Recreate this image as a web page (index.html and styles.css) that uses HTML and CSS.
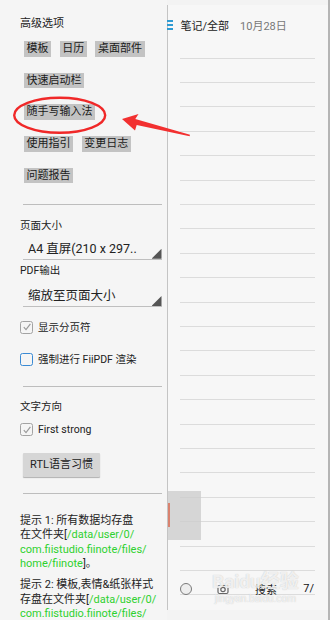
FILE: index.html
```html
<!DOCTYPE html>
<html lang="zh">
<head>
<meta charset="utf-8">
<link rel="stylesheet" href="styles.css">
</head>
<body>
<div class="screen">
  <aside class="settings">
    <div class="title">高级选项</div>
    <div class="btn-rows">
      <div class="btn-row"><span class="tag">模板</span><span class="tag">日历</span><span class="tag">桌面部件</span></div>
      <div class="btn-row"><span class="tag">快速启动栏</span></div>
      <div class="btn-row"><span class="tag">随手写输入法</span></div>
      <div class="btn-row"><span class="tag">使用指引</span><span class="tag">变更日志</span></div>
      <div class="btn-row"><span class="tag">问题报告</span></div>
    </div>
    <div class="divider d1"></div>
    <div class="label l-page">页面大小</div>
    <div class="spinner s1">A4 直屏(210 x 297..</div>
    <div class="label l-pdf">PDF输出</div>
    <div class="spinner s2">缩放至页面大小</div>
    <div class="check c1"><span class="box checked"><svg viewBox="0 0 10 10" width="10" height="10"><path d="M1.8 5.2 L4 7.6 L8.4 1.8" fill="none" stroke="#9a9a9a" stroke-width="1.2"/></svg></span><span class="check-text">显示分页符</span></div>
    <div class="check c2"><span class="box blue"></span><span class="check-text">强制进行 FiiPDF 渲染</span></div>
    <div class="divider d2"></div>
    <div class="label l-dir">文字方向</div>
    <div class="check c3"><span class="box checked"><svg viewBox="0 0 10 10" width="10" height="10"><path d="M1.8 5.2 L4 7.6 L8.4 1.8" fill="none" stroke="#9a9a9a" stroke-width="1.2"/></svg></span><span class="check-text">First strong</span></div>
    <div class="rtl-btn">RTL语言习惯</div>
    <div class="divider d3"></div>
    <p class="hint">提示 1: 所有数据均存盘<br>在文件夹[<span class="path">/data/user/0/<br>com.fiistudio.fiinote/files/<br>home/fiinote</span>]。</p>
    <p class="hint h2">提示 2: 模板,表情&amp;纸张样式<br>存盘在文件夹[<span class="path">/data/user/0/<br>com.fiistudio.fiinote/files/</span></p>
  </aside>

  <main class="notes">
    <div class="notes-head">
      <svg class="menu-icon" viewBox="0 0 6 10" width="6" height="10"><rect x="0" y="0" width="6" height="2" fill="#2e9bd3"/><rect x="0" y="4" width="6" height="2" fill="#2e9bd3"/><rect x="0" y="8" width="6" height="2" fill="#2e9bd3"/></svg>
      <span class="crumb">笔记/全部</span>
      <span class="date">10月28日</span>
    </div>
    <div class="lines">
      <div></div><div></div><div></div><div></div><div></div><div></div>
      <div></div><div></div><div></div><div></div><div></div><div></div>
      <div></div><div></div><div></div><div></div><div></div><div></div>
      <div></div><div></div><div></div><div></div><div></div>
    </div>
    <div class="handle"><span class="handle-mark"></span></div>
    <div class="toolbar">
      <span class="radio"></span>
      <svg class="tool-icon" viewBox="0 0 12 12" width="12" height="12"><rect x="1" y="2.5" width="10" height="8" rx="1.5" fill="none" stroke="#666" stroke-width="1.2"/><circle cx="6" cy="6.5" r="2.2" fill="none" stroke="#666" stroke-width="1.2"/></svg>
      <span class="search">搜索</span>
      <span class="page-num">7/</span>
    </div>
    <div class="watermark"><span class="wm-big">Baidu经验</span><span class="wm-small">jingyan.baidu.com</span></div>
  </main>
  <div class="edge"></div>

  <svg class="annot" viewBox="0 0 330 620" width="330" height="620">
    <ellipse cx="59.7" cy="115.3" rx="45.5" ry="17.5" fill="none" stroke="#f02828" stroke-width="2.4"/>
    <polygon points="122,119 138.5,114 135.3,119.1 190,134.8 189.6,136.3 136.7,124.9 135,130.5" fill="#f23030"/>
  </svg>
</div>
</body>
</html>
```

FILE: styles.css
```css
* { box-sizing: border-box; }
html, body { margin: 0; padding: 0; }
body {
  width: 330px;
  height: 620px;
  overflow: hidden;
  background: #f3f3f3;
  font-family: Roboto, "Noto Sans CJK SC", sans-serif;
  color: #222;
}
.screen {
  position: relative;
  width: 330px;
  height: 620px;
  display: flex;
  background: #f3f3f3;
}
.settings {
  width: 167px;
  flex: none;
  padding-left: 20px;
  background: #f5f5f5;
}
.title {
  margin-top: 16.5px;
  font-size: 11px;
  line-height: 14px;
}
.btn-rows {
  margin-top: 10.5px;
  margin-left: 4px;
  display: flex;
  flex-direction: column;
  gap: 16.2px;
}
.btn-row {
  display: flex;
  gap: 8.5px;
}
.tag {
  display: block;
  height: 15.5px;
  line-height: 15.5px;
  padding: 0 2.6px;
  background: #c3c3c3;
  font-size: 11px;
  color: #1a1a1a;
}
.divider {
  margin-left: 2.7px;
  width: 139px;
  height: 1px;
  background: #bdbdbd;
}
.d1 { margin-top: 20.5px; }
.label {
  font-size: 10.5px;
  line-height: 14px;
}
.l-page { margin-top: 14px; }
.l-pdf { margin-top: 4.6px; }
.l-dir { margin-top: 13.5px; }
.spinner {
  position: relative;
  margin-left: 3px;
  width: 138.5px;
  height: 22px;
  border-bottom: 1px solid #bfbfbf;
  padding-left: 5px;
  font-size: 12.5px;
  line-height: 21px;
}
.spinner::after {
  content: "";
  position: absolute;
  right: 0;
  bottom: 0;
  width: 10px;
  height: 10px;
  background: #555;
  clip-path: polygon(100% 0, 100% 100%, 0 100%);
}
.s1 { margin-top: 5px; }
.s2 { margin-top: 6.7px; }
.check {
  display: flex;
  align-items: center;
  gap: 5px;
  height: 13px;
  font-size: 10.5px;
}
.c1 { margin-top: 13.5px; }
.c2 { margin-top: 19px; }
.c3 { margin-top: 9px; }
.box {
  width: 13px;
  height: 13px;
  border: 1.3px solid #a3a3a3;
  border-radius: 2.5px;
  display: flex;
  align-items: center;
  justify-content: center;
  flex: none;
}
.box.blue { border-color: #3a8ad4; }
.check-text { line-height: 13px; }
.d2 { margin-top: 20px; }
.rtl-btn {
  margin-top: 17px;
  margin-left: 3px;
  width: 77px;
  height: 24.4px;
  line-height: 24.4px;
  text-align: center;
  background: #d6d6d6;
  box-shadow: 0 1px 1px rgba(0,0,0,0.28);
  border-radius: 1px;
  font-size: 11px;
}
.d3 { margin-top: 15.6px; }
.hint {
  margin: 20px 0 0;
  font-size: 11px;
  line-height: 14.3px;
  white-space: nowrap;
}
.hint.h2 { margin-top: 7px; }
.path { color: #2ed12e; }

.notes {
  position: relative;
  flex: none;
  width: 161px;
  margin-top: 5px;
  height: 605px;
  border-left: 1px solid #c4c4c4;
  background: #f7f7f7;
}
.notes-head {
  display: flex;
  align-items: center;
  height: 12px;
  margin-top: 14px;
  margin-left: -1px;
  font-size: 11px;
}
.menu-icon { flex: none; }
.crumb { margin-left: 7.5px; color: #222; }
.date { margin-left: 11px; color: #777; }
.lines {
  margin-top: 26.7px;
  margin-left: 12px;
  width: 135px;
}
.lines div {
  height: 24.4px;
  border-top: 1px solid #dcdcdc;
}
.handle {
  position: absolute;
  left: 0;
  top: 486px;
  width: 32.5px;
  height: 49px;
  background: rgba(205,205,205,0.8);
}
.handle-mark {
  position: absolute;
  left: 0;
  top: 12px;
  width: 2px;
  height: 24px;
  background: #d9826f;
}
.toolbar {
  position: absolute;
  left: 12px;
  top: 577px;
  width: 135px;
  height: 13px;
  display: flex;
  align-items: center;
  font-size: 11px;
}
.radio {
  width: 12px;
  height: 12px;
  border-radius: 50%;
  border: 1.5px solid #7a7a7a;
  background: #eee;
  flex: none;
}
.tool-icon { margin-left: 25px; flex: none; }
.search { margin-left: 26px; color: #222; }
.page-num { margin-left: auto; margin-right: 1px; color: #111; }
.watermark {
  position: absolute;
  left: 44px;
  top: 566px;
  display: flex;
  flex-direction: column;
  align-items: center;
  color: rgba(255,255,255,0.75);
  text-shadow: 0 0 1px rgba(150,150,150,0.6);
  pointer-events: none;
}
.wm-big { font-size: 19px; font-weight: bold; line-height: 22px; }
.wm-small { font-size: 10px; line-height: 12px; }
.edge {
  flex: none;
  width: 2px;
  margin-left: auto;
  background: #b5b5b5;
}
.annot {
  position: absolute;
  left: 0;
  top: 0;
  pointer-events: none;
}
```
